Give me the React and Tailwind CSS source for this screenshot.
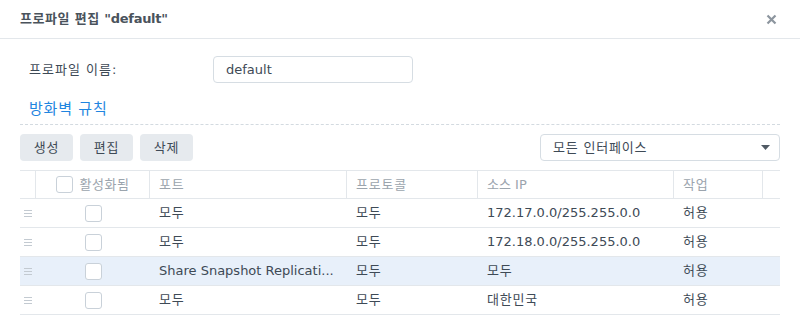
import React from 'react';

const font = { fontFamily: '"DejaVu Sans", "Noto Sans CJK KR", sans-serif' };

const rows = [
  { port: '모두', proto: '모두', src: '172.17.0.0/255.255.0.0', action: '허용' },
  { port: '모두', proto: '모두', src: '172.18.0.0/255.255.0.0', action: '허용' },
  { port: 'Share Snapshot Replicati...', proto: '모두', src: '모두', action: '허용', selected: true },
  { port: '모두', proto: '모두', src: '대한민국', action: '허용' },
];

const cols = 'grid grid-cols-[16px_114px_197px_131px_196px_89px_17px]';

// hangul-only text gets a little spacing so it spans like the reference
const isKo = (s) => /^[\uac00-\ud7a3\s:]+$/.test(s);

const Checkbox = () => (
  <span className="block w-[17px] h-[17px] rounded-[3px] border border-[#c9d1d9] bg-white" />
);

const DragHandle = () => (
  <span className="flex flex-col gap-[2px] w-[8px]">
    <span className="h-px bg-[#c3cad1]" />
    <span className="h-px bg-[#c3cad1]" />
    <span className="h-px bg-[#c3cad1]" />
  </span>
);

const Cell = ({ text }) => (
  <div className={`flex items-center pl-[9px] whitespace-nowrap overflow-hidden ${isKo(text) ? 'tracking-[0.8px]' : ''}`}>
    {text}
  </div>
);

const App = () => {
  return (
    <div className="w-[800px] h-[319px] bg-white overflow-hidden text-[13px] text-[#3e4a56]" style={font}>
      <div className="h-[39px] border-b border-[#e3e7eb] px-5 flex items-center justify-between">
        <h1 className="font-bold text-[13px] text-[#4a535c]">
          <span className="tracking-[0.5px]">프로파일 편집</span> <span className="tracking-[-0.3px]">"default"</span>
        </h1>
        <svg width="11" height="11" viewBox="0 0 11 11" className="mr-[3px]">
          <path d="M1.5 1.5 L9.5 9.5 M9.5 1.5 L1.5 9.5" stroke="#8c959e" strokeWidth="2.2" />
        </svg>
      </div>

      <div className="px-5">
        <div className="mt-[17px] flex items-center h-[27px]">
          <span className="pl-[9px] w-[193px] tracking-[1px]">프로파일 이름:</span>
          <div className="w-[200px] h-[27px] border border-[#d6dde3] rounded-[4px] flex items-center px-[12px]">
            default
          </div>
        </div>

        <div className="mt-[16px] pb-[5px] border-b border-dashed border-[#d3dae0]">
          <span className="pl-[9px] text-[15px] leading-[20px] text-[#1f85e0] block tracking-[0.8px]">방화벽 규칙</span>
        </div>

        <div className="mt-[9px] flex items-center justify-between">
          <div className="flex gap-[7px]">
            {['생성', '편집', '삭제'].map((label) => (
              <button key={label} className="w-[53px] h-[27px] rounded-[4px] bg-[#e6eaee] text-[#3e4a56] tracking-[0.8px]">
                {label}
              </button>
            ))}
          </div>
          <div className="w-[240px] h-[27px] border border-[#d6dde3] rounded-[4px] flex items-center justify-between pl-[12px] pr-[9px]">
            <span className="tracking-[0.8px]">모든 인터페이스</span>
            <svg width="9" height="5" viewBox="0 0 9 5">
              <path d="M0 0 H9 L4.5 5 Z" fill="#505a64" />
            </svg>
          </div>
        </div>

        <div className="mt-[9px]">
          <div className={`${cols} h-[29px] border-y border-[#e3e7eb] text-[#9ba4ad]`}>
            <div className="border-r border-[#e3e7eb]" />
            <div className="border-r border-[#e3e7eb] flex items-center justify-center gap-[7px]">
              <Checkbox />
              <span className="tracking-[0.5px]">활성화됨</span>
            </div>
            <div className="border-r border-[#e3e7eb] flex items-center pl-[9px] tracking-[0.8px]">포트</div>
            <div className="border-r border-[#e3e7eb] flex items-center pl-[9px] tracking-[0.8px]">프로토콜</div>
            <div className="border-r border-[#e3e7eb] flex items-center pl-[9px]">소스 IP</div>
            <div className="border-r border-[#e3e7eb] flex items-center pl-[9px] tracking-[0.8px]">작업</div>
            <div />
          </div>
          {rows.map((r, i) => (
            <div
              key={i}
              className={`${cols} h-[29px] border-b border-[#e3e7eb] ${r.selected ? 'bg-[#e8f0fa]' : ''}`}
            >
              <div className="flex items-center justify-center">
                <DragHandle />
              </div>
              <div className="flex items-center justify-center">
                <Checkbox />
              </div>
              <Cell text={r.port} />
              <Cell text={r.proto} />
              <Cell text={r.src} />
              <Cell text={r.action} />
              <div />
            </div>
          ))}
        </div>
      </div>
    </div>
  );
};

export default App;
